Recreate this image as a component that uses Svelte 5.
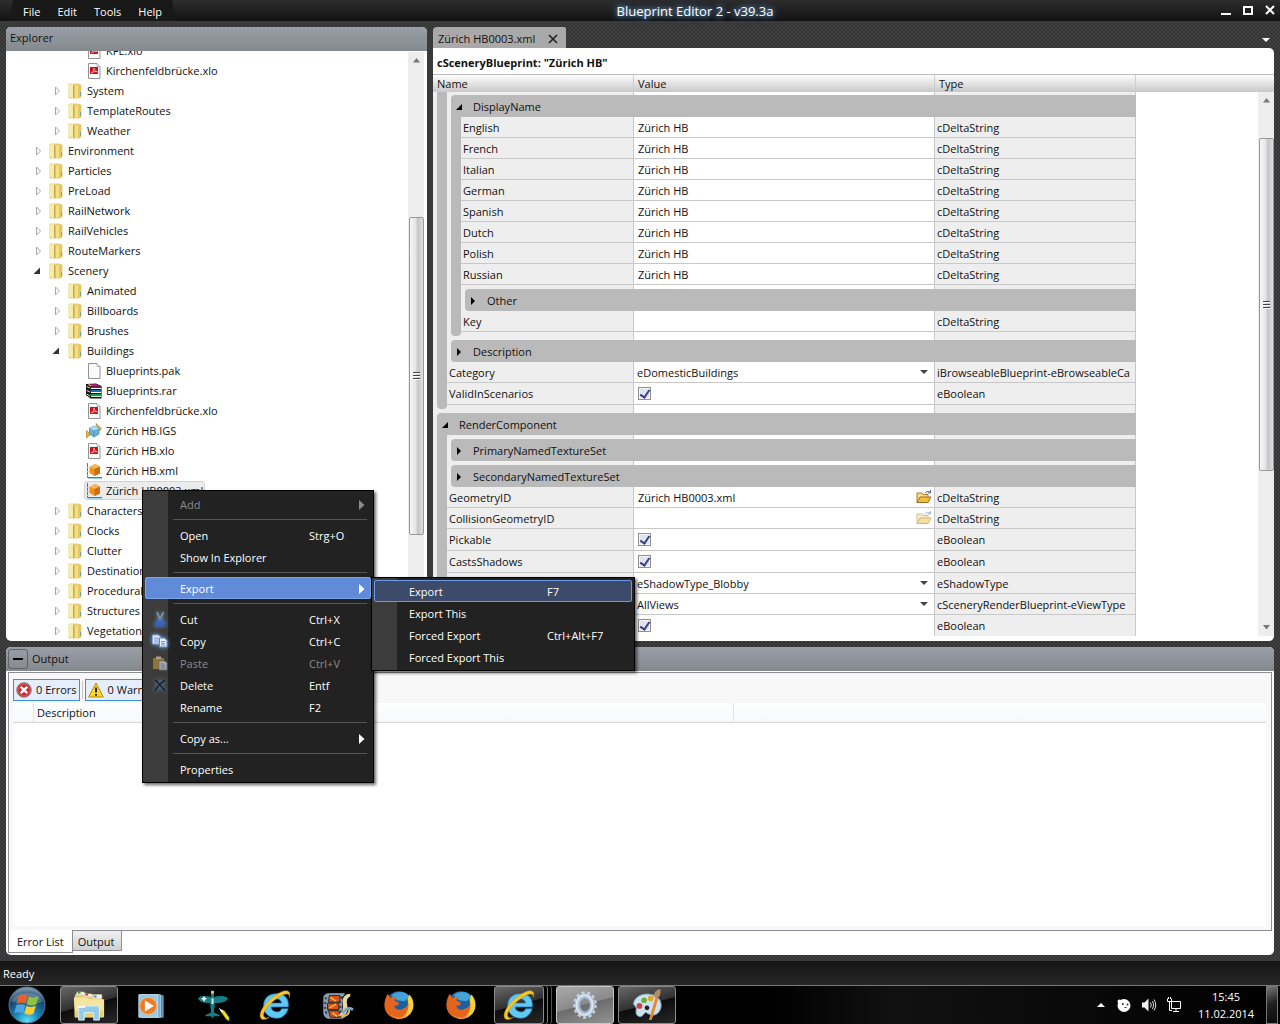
<script>
  const menus = ['File', 'Edit', 'Tools', 'Help'];

  const tree = [
    [3, 'pdf', 'KFE.xlo'],
    [3, 'pdf', 'Kirchenfeldbrücke.xlo'],
    [2, 'folder', 'System', 'closed'],
    [2, 'folder', 'TemplateRoutes', 'closed'],
    [2, 'folder', 'Weather', 'closed'],
    [1, 'folder', 'Environment', 'closed'],
    [1, 'folder', 'Particles', 'closed'],
    [1, 'folder', 'PreLoad', 'closed'],
    [1, 'folder', 'RailNetwork', 'closed'],
    [1, 'folder', 'RailVehicles', 'closed'],
    [1, 'folder', 'RouteMarkers', 'closed'],
    [1, 'folder', 'Scenery', 'open'],
    [2, 'folder', 'Animated', 'closed'],
    [2, 'folder', 'Billboards', 'closed'],
    [2, 'folder', 'Brushes', 'closed'],
    [2, 'folder', 'Buildings', 'open'],
    [3, 'page', 'Blueprints.pak'],
    [3, 'rar', 'Blueprints.rar'],
    [3, 'pdf', 'Kirchenfeldbrücke.xlo'],
    [3, 'igs', 'Zürich HB.IGS'],
    [3, 'pdf', 'Zürich HB.xlo'],
    [3, 'xml', 'Zürich HB.xml'],
    [3, 'xml', 'Zürich HB0003.xml'],
    [2, 'folder', 'Characters', 'closed'],
    [2, 'folder', 'Clocks', 'closed'],
    [2, 'folder', 'Clutter', 'closed'],
    [2, 'folder', 'Destinations', 'closed'],
    [2, 'folder', 'Procedural', 'closed'],
    [2, 'folder', 'Structures', 'closed'],
    [2, 'folder', 'Vegetation', 'closed']
  ].map(([level, icon, label, state]) => ({ level, icon, label, state }));
  const selected = 'Zürich HB0003.xml';

  const text = (rails, name, value = 'Zürich HB', extra = {}) =>
    ({ kind: 'text', rails, name, value, type: 'cDeltaString', ...extra });
  const bool = (rails, name) => ({ kind: 'bool', rails, name, type: 'eBoolean' });
  const pick = (rails, name, value, type) => ({ kind: 'pick', rails, name, value, type });
  const group = (rails, name, open = false) => ({ kind: 'group', rails, name, open });
  const gap = (rails, size = 'small', ending = false) => ({ kind: 'gap', rails, size, ending });

  const rows = [
    gap(1, 'tiny'),
    group(1, 'DisplayName', true),
    ...['English', 'French', 'Italian', 'German', 'Spanish', 'Dutch', 'Polish', 'Russian'].map((n) => text(2, n)),
    gap(2),
    group(2, 'Other'),
    text(2, 'Key', ''),
    gap(2, 'large', true),
    group(1, 'Description'),
    pick(1, 'Category', 'eDomesticBuildings', 'iBrowseableBlueprint-eBrowseableCa'),
    bool(1, 'ValidInScenarios'),
    gap(1, 'large', true),
    group(0, 'RenderComponent', true),
    gap(1),
    group(1, 'PrimaryNamedTextureSet'),
    gap(1),
    group(1, 'SecondaryNamedTextureSet'),
    text(1, 'GeometryID', 'Zürich HB0003.xml', { browse: true }),
    text(1, 'CollisionGeometryID', '', { browse: true, faded: true }),
    bool(1, 'Pickable'),
    bool(1, 'CastsShadows'),
    pick(1, '', 'eShadowType_Blobby', 'eShadowType'),
    pick(1, '', 'AllViews', 'cSceneryRenderBlueprint-eViewType'),
    bool(1, '')
  ];

  const contextMenu = [
    { label: 'Add', sub: true, off: true },
    null,
    { label: 'Open', key: 'Strg+O' },
    { label: 'Show In Explorer' },
    null,
    { label: 'Export', sub: true, hot: true },
    null,
    { label: 'Cut', key: 'Ctrl+X', icon: 'cut' },
    { label: 'Copy', key: 'Ctrl+C', icon: 'copy' },
    { label: 'Paste', key: 'Ctrl+V', icon: 'paste', off: true },
    { label: 'Delete', key: 'Entf', icon: 'delete' },
    { label: 'Rename', key: 'F2' },
    null,
    { label: 'Copy as...', sub: true },
    null,
    { label: 'Properties' }
  ];
  const exportMenu = [
    { label: 'Export', key: 'F7', hot: true },
    { label: 'Export This' },
    { label: 'Forced Export', key: 'Ctrl+Alt+F7' },
    { label: 'Forced Export This' }
  ];

  const tasks = [
    { app: 'files', name: 'Windows Explorer', look: 'running' },
    { app: 'player', name: 'Media Player' },
    { app: 'plane', name: 'Aircraft Editor' },
    { app: 'ie', name: 'Internet Explorer' },
    { app: 'film', name: 'Movie Maker' },
    { app: 'firefox', name: 'Firefox' },
    { app: 'firefox', name: 'Firefox' },
    { app: 'ie', name: 'Internet Explorer', look: 'running stack' },
    { app: 'gear', name: 'Blueprint Editor', look: 'active' },
    { app: 'paint', name: 'Paint', look: 'running' }
  ];
</script>

{#snippet fileIcon(kind)}
  <svg class="icon" viewBox="0 0 16 16" aria-hidden="true">
    {#if kind === 'folder'}
      <path d="M2 1h9l3 1v12l-2 1H2z" fill="#ead27a" stroke="#d6bd62" stroke-width=".7" />
      <path d="M2 1.500l4-.5V15l-4-1z" fill="#f7eda9" />
      <path d="M6 2l2 1.500V15.500L6 14.500z" fill="#c5a84c" />
      <path d="M7.500 3.500l3.500-2V14l-3.500 1.500z" fill="#f1df86" />
      <path d="M11 1.500l2.700 1V14L11 14.500z" fill="#e3c961" />
      <path d="M13.500 9v4" stroke="#6a9fa6" stroke-width=".9" />
    {:else if kind === 'pdf' || kind === 'page'}
      <path d="M2.500.5h8.500l3 3v12H2.500z" fill="#fafafa" stroke="#929292" />
      <path d="M11 .5v3h3" fill="#e4e7ea" stroke="#a3a9ae" stroke-width=".8" />
      {#if kind === 'pdf'}
        <path d="M4 4h8v7H4z" fill="#c4141b" />
        <path d="M5.300 10C7.500 8.500 8.500 6 8 5c-.3 2 1.700 3.500 3.300 3.700C9.500 8.300 7 8.700 5.300 10" fill="none" stroke="#fbd9d9" stroke-width=".7" />
      {/if}
    {:else if kind === 'rar'}
      <path d="M0 1l10-.5 5.500 2.500v12.500H4.500L0 12z" fill="#161616" />
      <path d="M2 1.500l8-.5 4.500 2.300-9.500.2z" fill="#b31f77" />
      <path d="M4.500 3.500h11v1.500h-11z" fill="#8d1559" /><path d="M5 5h10v1H5z" fill="#fff" />
      <path d="M4.500 7h11v2h-11z" fill="#1c6faf" /><path d="M5 9h10v1H5z" fill="#fff" />
      <path d="M4.500 11h11v2h-11z" fill="#159a61" /><path d="M5 13h10v1H5z" fill="#d8eedd" />
      <path d="M.8 3.500l3 1.500M.8 7.500l3 1.500M.8 11l3 2" stroke="#eee" /><path d="M2.500 1.500l2.500 1.500" stroke="#e6c24a" stroke-width="1.200" />
    {:else if kind === 'igs'}
      <path d="M10 .5l5.500 5-2 2.500-2-3z" fill="#eeb12d" stroke="#a4731b" stroke-width=".6" />
      <path d="M0 7.500l5 3.500-4.500 4z" fill="#eeb12d" stroke="#a4731b" stroke-width=".6" />
      <path d="M3.500 5L9 3l4 2.500V11l-5 3-4.500-3z" fill="#65b4d6" stroke="#3b86aa" stroke-width=".7" />
      <path d="M3.500 5L8 7.500 13 5.500 9 3z" fill="#a9dcec" /><path d="M8 7.500V14" stroke="#3b86aa" stroke-width=".7" />
    {:else}
      <path d="M1.500 0v14.500H16" fill="none" stroke="#367fa7" />
      <path d="M.5 12.500h2M.5 8.500h2M.5 4.500h2M2 15.500h14" stroke="#9ad3ec" />
      <path d="M3.500 4L9 1l5 2.500v7L8.500 13l-5-3z" fill="#eb9220" />
      <path d="M3.500 4L9 1l5 2.500L8.500 6z" fill="#f5b759" />
      <path d="M8.500 6L14 3.500v7L8.500 13z" fill="#cc6f13" />
    {/if}
  </svg>
{/snippet}

{#snippet menuIcon(kind)}
  <svg class="menu-icon" viewBox="0 0 18 18" aria-hidden="true">
    {#if kind === 'cut'}
      <path d="M6 1l3 8M12.500 1L9 9" stroke="#8b96a5" stroke-width="1.600" />
      <circle cx="6.500" cy="13" r="2" fill="none" stroke="#2b5cc0" stroke-width="1.700" />
      <circle cx="12" cy="12.500" r="2" fill="none" stroke="#2b5cc0" stroke-width="1.700" />
      <path d="M9 8l-2 3M9 8l2.500 3" stroke="#3c6fd0" stroke-width="1.500" />
    {:else if kind === 'copy'}
      <path d="M1.500 2h6l2 2v7h-8z" fill="#e4ecf8" stroke="#7fa0d6" />
      <path d="M3 5h5M3 7h5M3 9h5" stroke="#5579bc" stroke-width=".8" />
      <path d="M8.500 5h5l2.500 2.500V14H8.500z" fill="#e9f0fa" stroke="#5d83c8" />
      <path d="M10 8.500h4M10 10.300h4M10 12h4" stroke="#5579bc" stroke-width=".8" />
    {:else if kind === 'paste'}
      <path d="M2 3h11v11H2z" fill="#917437" /><path d="M5 1.500h5V4H5z" fill="#a5a08f" />
      <path d="M8 6h6l2 2v7H8z" fill="#a9adb3" stroke="#626870" stroke-width=".8" />
      <path d="M9.500 9h4M9.500 11h5M9.500 13h5" stroke="#5f656e" stroke-width=".8" />
    {:else}
      <path d="M4 3c4 3 7 7 10 11M14 3C10 6 6 10 4 14" fill="none" stroke="#1b2430" stroke-width="1.600" />
    {/if}
  </svg>
{/snippet}

{#snippet menuRow(item)}
  {#if item}
    <button class="item" class:hot={item.hot} class:off={item.off} role="menuitem" disabled={item.off}>
      <span class="item-icon">{#if item.icon}{@render menuIcon(item.icon)}{/if}</span>
      <span class="item-label">{item.label}</span>
      <span class="item-key">{item.key ?? ''}</span>
      {#if item.sub}<svg class="sub" viewBox="0 0 6 10" aria-hidden="true"><path d="M0 0l5.500 5L0 10z" fill="currentColor" /></svg>{/if}
    </button>
  {:else}
    <div class="separator" role="separator"></div>
  {/if}
{/snippet}

{#snippet scrollbar(where)}
  <div class="scrollbar {where}" aria-hidden="true">
    <svg viewBox="0 0 7 5"><path d="M0 4.500L3.500 0 7 4.500z" fill="#777" /></svg>
    <div class="track"><div class="thumb"><i></i></div></div>
    <svg viewBox="0 0 7 5"><path d="M0 0h7L3.500 4.500z" fill="#777" /></svg>
  </div>
{/snippet}

{#snippet taskIcon(app)}
  <svg class="task-icon" viewBox="0 0 36 36" aria-hidden="true">
    {#if app === 'files'}
      <path d="M3 8l2-3h9l2 2h16v24H3z" fill="#e5ca75" />
      <path d="M5 4h8v3H5z" fill="#eef0e6" /><path d="M6 4h3v2H6z" fill="#35a14b" />
      <path d="M13 6h8v3h-8z" fill="#f3eee4" /><path d="M14 6h3v2h-3z" fill="#ce3b34" />
      <path d="M22 7h9v4h-9z" fill="#edf1f5" /><path d="M23 8h3v2h-3z" fill="#388bc8" />
      <path d="M2 10h13l3 2h16v19H3z" fill="#f5e5a1" /><path d="M3 24h30v7H3z" fill="#e8cf7c" />
      <path d="M7 34V22q0-3 3-3h16q3 0 3 3v12h-6v-8H13v8z" fill="#91cde6" stroke="#d9f1f9" />
      <path d="M6 20h8" stroke="#fff" stroke-width="2" />
    {:else if app === 'player'}
      <path d="M9 8h22v23H9z" fill="#5590ba" stroke="#8fbcd8" stroke-width=".6" /><path d="M7 7h21v24H7z" fill="#77afd1" stroke="#bddced" stroke-width=".7" />
      <path d="M5 7h20v24H5z" fill="#98c8e2" stroke="#d4eaf5" stroke-width=".7" />
      <circle cx="15" cy="19" r="9" fill="#ee7b22" stroke="#f8b783" /><path d="M11.500 13L21 19l-9.500 6z" fill="#fff" />
    {:else if app === 'plane'}
      <path d="M2 11c3-3.500 9-2.500 14-1.500V5h3v4.500c5-1 11-2 15 1.500-2 4-9 5-14 5l-1 10 6 2.500v1.500h-6l-1.500 2-1.500-2h-6v-1.500l6-2.500-1-10C10 16 4 15 2 11z" fill="#147e84" />
      <path d="M16 3h3v3h-3z" fill="#ebdc27" /><path d="M6 11.500h5M8.500 9v5" stroke="#fff" stroke-width="1.600" />
      <path d="M16.500 11h2v6h-2z" fill="#e2e9e9" />
      <path d="M26 23l4 1 5 7v4l-3-2-5-7z" fill="#e9df23" stroke="#756e12" stroke-width=".6" /><path d="M24 21l5 3-2 2z" fill="#fff" />
    {:else if app === 'ie'}
      <path d="M32 22h-7c-1 3-4 4-7 3-3-1-4-3-4-5h18C33 11 28 6 20 6 11 6 6 11 6 19c0 8 6 13 14 13 6 0 10-4 12-10zM14 16c1-6 10-6 11 0z" fill="#62c7f1" stroke="#1c87c4" stroke-width=".8" />
      <path d="M4 33C-2 28 8 15 18 8 29 0 36 2 33 10c1-6-6-4-13 1C10 18 3 28 7 31c1 1 3 1 5 0-3 2-6 3-8 2z" fill="#f5c62c" stroke="#c08912" stroke-width=".5" />
    {:else if app === 'film'}
      <path d="M4 10c0-2 2-4 5-4h17l-3 4v14c0 4 2 5 4 6l-3 2H8c-3-1-4-3-4-6z" fill="#7f9ab2" stroke="#b9cad8" stroke-width=".7" />
      <path d="M10 8h11v7H9zM8 16h12v7H8zM9 24h11l2 7H11z" fill="#d8541a" stroke="#2e2018" />
      <path d="M11 10l6 4M10 21l7-4M13 26l5 4" stroke="#f6bd46" stroke-width="1.500" />
      <path d="M6 10v2M5.500 15v2M5.500 20v2M6.500 25v2M23 9l-1 2M21.500 14v2M21.500 19v2M22 24v2" stroke="#1c3347" stroke-width="2" />
      <path d="M32 6c-6 0-9 5-8 10 1 6 0 10-5 13 8 2 11-3 10-10-1-5-1-8 3-10z" fill="#ead6a0" />
      <path d="M24 27c3-5 6-7 11-4" fill="none" stroke="#71a6c9" stroke-width="3" />
      <path d="M22 29c5 2 9-1 9-6" fill="none" stroke="#e3b85c" stroke-width="2" />
    {:else if app === 'firefox'}
      <circle cx="18" cy="18" r="14.500" fill="#1e5f9f" /><path d="M10 8c5-5 15-5 19 1l-5 5-8-1z" fill="#46a3d8" />
      <path d="M29 7c6 6 6 17-1 22-3 3-8 4-10 3 7-4 11-12 9-20z" fill="#f7d03f" />
      <path d="M4 10l2-4 3 5c2-2 5-2 6-1l-2 3 5 3c0 3-4 3-5 3 1 4 6 5 9 3 4-1 6-4 6-7 1 8-3 15-9 17-8 1-14-3-16-10-1-4 0-9 1-12z" fill="#e3641a" />
      <path d="M7 26c5 6 14 7 20 1-2 4-6 6-10 6-4-1-8-3-10-7z" fill="#ee8a22" />
    {:else if app === 'gear'}
      <ellipse cx="18" cy="18" rx="10.500" ry="12.500" fill="none" stroke="#c5d3e3" stroke-width="4" stroke-dasharray="3.200 2.400" />
      <ellipse cx="18" cy="18" rx="8" ry="9.500" fill="none" stroke="#aebfd3" stroke-width="5.500" />
      <ellipse cx="17.500" cy="18" rx="8.500" ry="10.500" fill="none" stroke="#dde7f2" stroke-width="2" />
      <ellipse cx="18" cy="18" rx="5" ry="6.500" fill="none" stroke="#75889e" />
    {:else}
      <path d="M4 15C7 6 20 4 28 9c7 5 6 14 1 18-5 4-10 0-12-1s-3 6-8 4c-5-3-1-8-3-10-1-2-3-2-2-5z" fill="#cde1ee" stroke="#7da5c0" />
      <circle cx="10" cy="19" r="3" fill="#cf4242" /><circle cx="15" cy="13" r="3" fill="#6cae37" />
      <circle cx="22" cy="11" r="3" fill="#e3a532" /><circle cx="18" cy="21" r="2.500" fill="#16262f" />
      <path d="M20 34L27 10l3 1-7 23z" fill="#e18936" /><path d="M26 10c-2-4 1-8 6-9 1 4 0 8-3 10z" fill="#b58d65" />
    {/if}
  </svg>
{/snippet}

<div class="screen">
  <header class="titlebar">
    <nav class="menubar" aria-label="Main menu">
      {#each menus as name}<button>{name}</button>{/each}
    </nav>
    <h1>Blueprint Editor 2 - v39.3a</h1>
    <div class="window-buttons">
      <button aria-label="Minimize"><svg viewBox="0 0 12 12"><path d="M1 9h10" stroke="#fff" stroke-width="2" /></svg></button>
      <button aria-label="Maximize"><svg viewBox="0 0 12 12"><path d="M2 2h8v7H2z" fill="none" stroke="#fff" stroke-width="2" /></svg></button>
      <button aria-label="Close"><svg viewBox="0 0 12 12"><path d="M2 1l8 8M10 1l-8 8" stroke="#fff" stroke-width="2" /></svg></button>
    </div>
  </header>

  <main class="workspace">
    <div class="upper">
      <section class="panel explorer">
        <h2 class="panel-title">Explorer</h2>
        <div class="explorer-body">
          <ul class="tree">
            {#each tree as node}
              <li class="node level{node.level}">
                <span class="twisty {node.state ?? ''}">
                  {#if node.state === 'closed'}
                    <svg viewBox="0 0 8 10"><path d="M1.500 1l4 4-4 4z" fill="#fff" stroke="#a6a6a6" /></svg>
                  {:else if node.state === 'open'}
                    <svg viewBox="0 0 8 10"><path d="M7 1.500V8H.5z" fill="#333" /></svg>
                  {/if}
                </span>
                <button class="node-label" class:selected={node.label === selected}>{@render fileIcon(node.icon)}{node.label}</button>
              </li>
            {/each}
          </ul>
          {@render scrollbar('tree-bar')}
        </div>
      </section>

      <section class="document">
        <div class="tabs">
          <div class="doc-tab">
            <button>Zürich HB0003.xml</button>
            <button aria-label="Close tab"><svg viewBox="0 0 10 10"><path d="M1 1l8 8M9 1L1 9" stroke="#222" stroke-width="1.600" /></svg></button>
          </div>
          <button class="tab-list" aria-label="Open documents"><svg viewBox="0 0 8 4"><path d="M0 0h8L4 4z" fill="#fff" /></svg></button>
        </div>
        <div class="sheet">
          <h2>cSceneryBlueprint: "Zürich HB"</h2>
          <table class="props">
            <thead>
              <tr><th>Name</th><th>Value</th><th>Type</th></tr>
            </thead>
            <tbody>
              {#each rows as row, i}
                {#if row.kind === 'group'}
                  <tr class="group">
                    <td colspan="3">
                      {#each Array(row.rails) as _}<i class="rail"></i>{/each}
                      <button class="bar" class:open={row.open} aria-expanded={row.open}>
                        <svg viewBox="0 0 7 10">
                          {#if row.open}<path d="M6 2v6H0z" />{:else}<path d="M1 1l4 4-4 4z" />{/if}
                        </svg>
                        {row.name}
                      </button>
                    </td>
                  </tr>
                {:else if row.kind === 'gap'}
                  <tr class="gap {row.size}" class:ending={row.ending} aria-hidden="true">
                    <td>{#each Array(row.rails) as _}<i class="rail"></i>{/each}</td><td></td><td></td>
                  </tr>
                {:else}
                  <tr class={row.kind}>
                    <td>
                      {#each Array(row.rails) as _}<i class="rail"></i>{/each}
                      <label for="field{i}">{row.name}</label>
                    </td>
                    <td>
                      {#if row.kind === 'bool'}
                        <input id="field{i}" type="checkbox" checked aria-label={row.name || row.type} />
                      {:else if row.kind === 'pick'}
                        <select id="field{i}" aria-label={row.name || row.type}><option>{row.value}</option></select>
                        <svg class="drop" viewBox="0 0 8 4" aria-hidden="true"><path d="M0 0h8L4 4z" fill="#444" /></svg>
                      {:else}
                        <input id="field{i}" type="text" value={row.value} />
                        {#if row.browse}
                          <button class="browse" class:faded={row.faded} aria-label="Browse">
                            <svg viewBox="0 0 16 14">
                              <path d="M1 12.500V3h5l1 1.500h5V7" fill="#f7dd8c" stroke="#a87c25" />
                              <path d="M1 12.500L4 7h11l-3 5.500z" fill="#f1be45" stroke="#9c701b" />
                              <path d="M9 3q2-3 5-1M14.500 0v3h-3" fill="none" stroke="#4b6f9c" />
                            </svg>
                          </button>
                        {/if}
                      {/if}
                    </td>
                    <td><span>{row.type}</span></td>
                  </tr>
                {/if}
              {/each}
            </tbody>
          </table>
          {@render scrollbar('sheet-bar')}
        </div>
      </section>
    </div>

    <section class="panel output">
      <h2 class="panel-title">
        <button class="collapse" aria-label="Collapse"><svg viewBox="0 0 10 2"><path d="M0 1h10" stroke="#000" stroke-width="2" /></svg></button>
        Output
      </h2>
      <div class="output-body">
        <div class="toolbar">
          <button class="filter">
            <svg viewBox="0 0 16 16"><circle cx="8" cy="8" r="7.300" fill="#c5282e" stroke="#8c8c8c" /><circle cx="8" cy="8" r="6" fill="none" stroke="#e98c8c" stroke-width=".6" /><path d="M4.800 4.800l6.400 6.400M11.200 4.800l-6.400 6.400" stroke="#fff" stroke-width="2.400" /></svg>
            0 Errors
          </button>
          <i class="divider"></i>
          <button class="filter">
            <svg viewBox="0 0 16 16"><path d="M8 1l7.300 14H.7z" fill="#fbd723" stroke="#b88b0c" stroke-linejoin="round" /><path d="M8 5.500v5M8 12v1.800" stroke="#111" stroke-width="1.800" /></svg>
            0 Warnings
          </button>
        </div>
        <table class="errors">
          <thead><tr><th aria-label="Severity"></th><th>Description</th><th aria-label="Source"></th></tr></thead>
        </table>
      </div>
      <div class="output-tabs">
        <button class="current">Error List</button>
        <button class="other">Output</button>
        <i></i>
      </div>
    </section>
  </main>

  <footer class="status">Ready</footer>

  <nav class="taskbar" aria-label="Taskbar">
    <button class="start" aria-label="Start">
      <svg viewBox="0 0 38 38">
        <defs>
          <radialGradient id="orb" cx=".5" cy=".95" r=".95">
            <stop offset="0" stop-color="#5fe0f8" /><stop offset=".35" stop-color="#1a86b8" /><stop offset=".7" stop-color="#17466d" /><stop offset="1" stop-color="#8aa3b8" />
          </radialGradient>
        </defs>
        <circle cx="19" cy="19" r="18" fill="url(#orb)" stroke="#54788f" />
        <path d="M4 16C6 5 31 4 34 16c-9 3-20-1-30 0z" fill="#fff" opacity=".22" />
        <path d="M10.500 10c3-2 6.500-2 9-.2l-2 8.200c-2.500-1.700-6-1.700-9 .2z" fill="#e9602c" />
        <path d="M20.800 10.300c3 1.500 6.500 1.500 10-.2l-2.600 8.300c-3.500 1.600-6.800 1.300-9.500-.2z" fill="#8fc43e" />
        <path d="M8.200 19.600c3-1.900 6.500-1.800 9-.2l-2 7.800c-2.500-1.500-6-1.400-9 .4z" fill="#4fa5df" />
        <path d="M18.400 19.700c2.700 1.500 6 1.600 9.500.1l-2.400 7.900c-3.300 1.600-6.500 1.200-9.200-.4z" fill="#fbcb2f" />
      </svg>
    </button>
    {#each tasks as task}
      <button class="task {task.look ?? ''}" aria-label={task.name}>{@render taskIcon(task.app)}</button>
    {/each}
    <div class="tray">
      <svg class="tray-up" viewBox="0 0 8 4"><path d="M0 4l4-4 4 4z" fill="#fff" /></svg>
      <svg viewBox="0 0 16 16"><circle cx="8" cy="8.500" r="6.500" fill="#fff" /><circle cx="3.500" cy="4.500" r="2" fill="#fff" /><circle cx="6.800" cy="7" r="1" fill="#333" /><circle cx="11.500" cy="7.500" r="1" fill="#333" /><path d="M8.500 10.500h2" stroke="#333" /></svg>
      <svg viewBox="0 0 16 16"><path d="M1 5.500h2.500L7.500 1.500v13L3.500 10.500H1z" fill="#eee" /><path d="M9.500 5.500q1.500 2.500 0 5M11.500 4q2.500 4 0 8M13 2.500q3.500 5.500 0 11" fill="none" stroke="#ddd" /></svg>
      <svg viewBox="0 0 16 16"><path d="M5.500 4.500h9v7h-9zM7 14.500h6M10 12v2.500M3.500 5v8.500H6" fill="none" stroke="#fff" /><path d="M1.500 1.500v3h4v-3M2.500 0v2M4.500 0v2" fill="none" stroke="#fff" /></svg>
    </div>
    <div class="clock"><time>15:45</time><time>11.02.2014</time></div>
    <button class="desktop" aria-label="Show desktop"></button>
  </nav>

  <div class="menu context" role="menu" aria-label="File actions">
    {#each contextMenu as item}{@render menuRow(item)}{/each}
  </div>
  <div class="menu export" role="menu" aria-label="Export">
    {#each exportMenu as item}{@render menuRow(item)}{/each}
  </div>
</div>

<style>
  :global(body) { margin: 0; background: #000; }
  .screen {
    position: relative; display: flex; flex-direction: column; height: 100vh; overflow: hidden;
    font: 11px/16px "Open Sans", "Noto Sans", sans-serif; color: #111;
    background-color: #343434;
    background-image: radial-gradient(circle, #404040 0 1px, transparent 1px), radial-gradient(circle, #404040 0 1px, transparent 1px);
    background-size: 4px 4px; background-position: 0 0, 2px 2px;
  }
  .screen * { box-sizing: border-box; }
  h1, h2, ul { margin: 0; padding: 0; font-weight: 400; font-size: inherit; list-style: none; }
  button, input, select { font: inherit; color: inherit; background: none; border: 0; margin: 0; padding: 0; border-radius: 0; outline: 0; }
  button { display: flex; align-items: center; white-space: nowrap; }
  svg { display: block; flex: none; }

  .titlebar {
    display: grid; grid-template-columns: 1fr auto 1fr; align-items: center; flex: none; height: 21px; padding: 0 4px 0 10px;
    background: linear-gradient(#2d2d2d, #131313); color: #fff;
    text-shadow: 0 0 5px #7fb4e6, 0 0 8px #4b7eb0;
  }
  .menubar {
    display: flex; gap: 17px; width: 166px; height: 21px; padding: 2px 13px 0; background: #181818;
    clip-path: polygon(3px 0, 162px 0, 100% 100%, 0 100%);
  }
  .titlebar h1 { font-size: 13px; padding: 1px 0 0 104px; }
  .window-buttons { display: flex; justify-content: flex-end; gap: 10px; }
  .window-buttons svg { width: 12px; height: 12px; }

  .workspace { flex: 1; min-height: 0; display: flex; flex-direction: column; gap: 6px; padding: 6px; }
  .upper { flex: 615 1 0; min-height: 0; display: grid; grid-template-columns: 421px 1fr; gap: 6px; }
  .panel { display: flex; flex-direction: column; min-height: 0; min-width: 0; background: #fff; border-radius: 5px; overflow: hidden; }
  .panel-title {
    display: flex; align-items: center; gap: 4px; flex: none; height: 24px; padding: 0 4px 2px;
    background: linear-gradient(#9a9fa7, #84898e);
  }
  .explorer-body { display: flex; flex: 1; min-height: 0; padding-right: 3px; }
  .tree { flex: 1; overflow: hidden; display: flex; flex-direction: column; justify-content: flex-end; }
  .node { display: flex; align-items: center; flex: none; height: 20px; }
  .level1 { padding-left: 26px; }
  .level2 { padding-left: 45px; }
  .level3 { padding-left: 64px; }
  .twisty { width: 14px; flex: none; padding-left: 1px; }
  .twisty.closed { padding-left: 3px; }
  .twisty svg { width: 8px; height: 10px; }
  .node-label { gap: 4px; height: 19px; padding: 0 1px; border: 1px solid transparent; border-radius: 3px; }
  .selected { background: #ececec; border-color: #d2d2d2; }
  .icon { width: 16px; height: 16px; }

  .scrollbar { display: flex; flex-direction: column; align-items: center; width: 16px; flex: none; padding: 6px 0; background: #ededed; }
  .scrollbar > svg { width: 7px; height: 5px; }
  .track { flex: 1; width: 15px; display: flex; flex-direction: column; }
  .thumb {
    display: flex; align-items: center; justify-content: center; border: 1px solid #979797; border-radius: 2px;
    background: linear-gradient(90deg, #f6f6f6, #e4e4e4 45%, #c4c4c8 60%, #dedee0);
  }
  .thumb i { width: 7px; height: 8px; background: repeating-linear-gradient(#444 0 1px, #fff 1px 2px, transparent 2px 3px); }
  .tree-bar { margin: 1px 0 6px; }
  .tree-bar .track { padding-top: 154px; }
  .tree-bar .thumb { height: 318px; }

  .document { display: flex; flex-direction: column; min-width: 0; min-height: 0; }
  .tabs { display: flex; justify-content: space-between; align-items: center; height: 21px; flex: none; }
  .doc-tab { display: flex; gap: 13px; height: 21px; padding: 2px 8px 0 5px; background: #a9a9a9; border-radius: 4px 2px 0 0; }
  .doc-tab svg { width: 10px; height: 10px; }
  .tab-list { padding: 4px 4px 0; }
  .tab-list svg { width: 8px; height: 4px; }
  .sheet {
    flex: 1; min-height: 0; display: grid; grid-template: 26px 18px 1fr / 1fr 16px; padding-bottom: 5px;
    background: #fff; border-radius: 0 5px 5px 5px; overflow: hidden;
  }
  .sheet h2 { grid-area: 1 / 1 / 2 / 3; padding: 7px 4px 0; font-weight: 700; }
  .props { grid-area: 2 / 1 / 4 / 3; display: flex; flex-direction: column; min-height: 0; border-spacing: 0; }
  .props thead { display: block; height: 18px; border-top: 1px solid #bbb; background: linear-gradient(#fdfdfd, #c9c9c9); }
  .props tbody { display: block; flex: 1; min-height: 0; overflow: hidden; }
  .props tr { display: grid; grid-template-columns: 201px 301px 201px; height: 21px; }
  .props thead tr { height: 17px; }
  th { display: block; text-align: left; font-weight: 400; padding: 1px 4px 0; border-right: 1px solid #ccc; }
  .props td { display: flex; align-items: stretch; min-width: 0; padding: 0; border-right: 1px solid #c8c8c8; overflow: hidden; background: #fff; }
  .props td:first-child { padding-left: 4px; background: #eee; }
  .props td:last-child { background: #eee; }
  .props .group td { border: 0; }
  .props label, .props td > span { flex: 1; padding: 3px 2px 0; white-space: nowrap; border-bottom: 1px solid #c8c8c8; }
  .props td > span { padding-right: 0; }
  .props tr:not(.gap):not(.group) td:nth-child(2) { border-bottom: 1px solid #c8c8c8; align-items: center; }
  .props .bool { height: 22px; }
  .props .group { display: grid; grid-template-columns: 703px; height: 22px; }
  .rail { flex: none; width: 10px; margin-right: 4px; background: #bababa; }
  .rail:has(+ label) { margin-right: 0; }
  .gap.tiny { height: 3px; }
  .gap.small { height: 4px; }
  .gap.large { height: 8px; }
  .ending .rail:last-child { height: 4px; border-radius: 0 0 5px 5px; }
  .bar { flex: 1; gap: 10px; padding: 2px 5px 0 5px; background: #bababa; border-radius: 4px 0 0 4px; }
  .bar.open { border-radius: 4px 0 0 0; }
  .bar svg { width: 7px; height: 10px; }
  input[type='text'] { flex: 1; min-width: 0; height: 20px; padding: 1px 4px 0; }
  select { flex: 1; min-width: 0; height: 20px; padding: 2px 3px 0; appearance: none; }
  .drop { width: 8px; height: 4px; margin-right: 6px; }
  input[type='checkbox'] { appearance: none; width: 13px; height: 13px; margin-left: 4px; border: 1px solid #8e8f8f; background: #dfe3ec; box-shadow: inset 0 0 0 1px #f8f8f8; }
  input[type='checkbox']:checked::after { content: ''; display: block; width: 4px; height: 8px; margin: 0 0 0 3px; border: solid #363c86; border-width: 0 2px 2px 0; transform: rotate(35deg); }
  .browse { margin-right: 2px; }
  .browse svg { width: 16px; height: 14px; }
  .faded { opacity: .5; }
  .sheet-bar { grid-area: 3 / 2 / 4 / 3; z-index: 1; }
  .sheet-bar .track { padding-top: 35px; }
  .sheet-bar .thumb { height: 333px; }

  .output { flex: 307 1 0; padding-bottom: 2px; }
  .output .panel-title { padding: 1px 2px 0; }
  .collapse { justify-content: center; width: 20px; height: 20px; border: 1px solid #5f6367; border-radius: 3px; }
  .collapse svg { width: 10px; height: 2px; }
  .output-body { flex: 1; min-height: 0; margin: 1px 2px 0; border: 1px solid #8c8e94; border-bottom: 0; padding: 6px 5px 4px 4px; display: flex; flex-direction: column; background: #f8f8f8; }
  .toolbar { display: flex; gap: 2px; height: 24px; flex: none; }
  .filter { gap: 4px; height: 22px; padding: 1px 2px 0; border: 1px solid #3c8fdb; background: #e5eefa; }
  .filter svg { width: 16px; height: 16px; }
  .divider { width: 1px; height: 18px; margin-top: 2px; background: #c5c5c5; }
  .errors { flex: 1; display: block; background: #fff; }
  .errors thead { display: block; }
  .errors tr { display: grid; grid-template-columns: 21px 700px 1fr; height: 20px; border-bottom: 1px solid #d5d5d5; background: linear-gradient(#fff, #f7f8fa); }
  .errors th { padding: 2px 3px; border-color: #e2e2e2; }
  .errors th:last-child { border: 0; }
  .output-tabs { display: flex; margin: 0 2px; height: 23px; flex: none; }
  .output-tabs .current { height: 23px; padding: 2px 8px 0; border: 1px solid #8c8e94; border-top: 0; background: #fff; }
  .output-tabs .other { height: 21px; padding: 2px 7px 0 5px; border: 1px solid #8c8e94; border-left: 0; background: linear-gradient(#f1f1f1, #d0d0d0); }
  .output-tabs i { flex: 1; border-top: 1px solid #8c8e94; }

  .status { flex: none; height: 24px; padding: 4px 3px; color: #fff; background: linear-gradient(#161616, #242424dd); border-top: 1px solid #111; }
  .taskbar { display: flex; align-items: stretch; gap: 4px; flex: none; height: 39px; padding: 0 2px 0 8px; background: linear-gradient(90deg, #000 60%, #111 70%, #000); border-top: 1px solid #777; color: #fff; }
  .start { width: 48px; }
  .start svg { width: 38px; height: 38px; }
  .task { justify-content: center; width: 58px; border: 1px solid transparent; border-radius: 3px; }
  .task-icon { width: 34px; height: 34px; }
  .running { border-color: #8b8b8b; background: linear-gradient(165deg, #686868, #303030 48%, #0c0c0c 50%, #282828); }
  .active { border-color: #c5c5c5; background: linear-gradient(165deg, #aaa, #8a8a8a 48%, #6c6c6c 50%, #929292); }
  .stack { width: 50px; margin-right: 8px; box-shadow: 3px 0 #000, 4px 0 #777, 7px 0 #000, 8px 0 #555; }
  .tray { display: flex; align-items: center; gap: 9px; margin-left: auto; }
  .tray svg { width: 16px; height: 16px; }
  .tray svg.tray-up { width: 8px; height: 4px; margin-right: 2px; }
  .clock { display: flex; flex-direction: column; align-items: center; width: 72px; margin-left: 4px; padding-top: 2px; line-height: 17px; }
  .desktop { width: 12px; border: 1px solid #777; background: linear-gradient(160deg, #777, #222 45%, #0a0a0a); }

  .menu {
    position: absolute; z-index: 5; display: flex; flex-direction: column; border: 1px solid #000;
    background: linear-gradient(90deg, #3c3c3c 25px, #222 25px); box-shadow: 2px 2px 3px #0009;
    color: #fff; text-shadow: 0 0 4px #6ea4dc, 0 0 6px #5e94cc;
  }
  .context { left: 142px; top: 490px; width: 232px; padding: 2px 2px 2px; }
  .export { left: 371px; top: 577px; width: 264px; padding: 2px 2px 2px; }
  .item { height: 22px; border: 1px solid transparent; border-radius: 2px; padding: 1px 5px 0 5px; }
  .item-icon { width: 29px; display: flex; }
  .item-label { flex: 1; text-align: left; }
  .item-key { width: 50px; text-align: left; }
  .context .item-key { margin-right: 6px; }
  .export .item-key { width: 79px; }
  .context .item:has(.sub) .item-key { width: 0; }
  .menu-icon { width: 18px; height: 18px; filter: drop-shadow(0 0 2px #6f9fd0); }
  .sub { width: 6px; height: 10px; }
  .off { color: #8b8b8b; text-shadow: none; }
  .off .menu-icon { filter: none; }
  .context .hot { background: #5f8bd8; border-color: #7ba4ea; }
  .export .hot { background: #3b4b69; border-color: #6d9ae6; }
  .separator { height: 9px; margin: 0 4px 0 28px; border: solid transparent; border-width: 4px 0; background: #555 content-box; }
</style>
